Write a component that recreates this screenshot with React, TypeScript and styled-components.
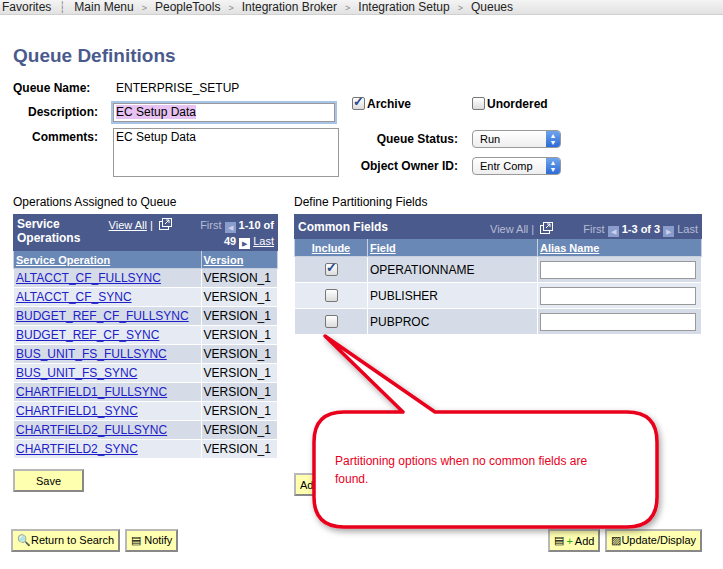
import React from 'react';
import styled, { createGlobalStyle } from 'styled-components';

const Global = createGlobalStyle`
  body { margin: 0; background: #fff; font-family: "Liberation Sans", Arial, sans-serif; font-size: 12px; color: #000; }
`;

const Page = styled.div`
  position: relative;
  width: 723px;
  height: 569px;
  overflow: hidden;
`;

const Crumbs = styled.div`
  height: 14px;
  background: linear-gradient(#f4f4f4, #e2e2e2);
  border-bottom: 1px solid #d0d0d0;
  display: flex;
  align-items: center;
  padding-left: 2px;
  font-size: 12px;
  line-height: 14px;
  color: #222;
`;

const Crumb = styled.span<{ sep?: string }>`
  margin-right: 8px;
  &::after {
    content: '${({ sep }) => sep || ''}';
    margin-left: 8px;
    color: #888;
    font-size: ${({ sep }) => (sep === '>' ? '9px' : '11px')};
  }
`;

const Body = styled.div`
  padding: 30px 0 0 13px;
`;

const Title = styled.h1`
  margin: 0 0 12px 0;
  font-size: 19px;
  font-weight: bold;
  color: #4b5a8c;
`;

const TopForm = styled.div`
  display: flex;
`;

const LabelCol = styled.div`
  display: grid;
  grid-template-columns: 95px 230px;
  row-gap: 6px;
  align-items: start;
`;

const Label = styled.div`
  font-weight: bold;
  text-align: right;
  padding-right: 10px;
  line-height: 18px;
`;

const Value = styled.div`
  line-height: 18px;
  padding-left: 8px;
`;

const TextInput = styled.div<{ tall?: boolean; focus?: boolean }>`
  width: ${({ focus }) => (focus ? '216px' : '220px')};
  height: ${({ tall }) => (tall ? '45px' : '15px')};
  border: 1px solid #999;
  margin-left: 5px;
  padding: 1px 2px;
  font-size: 12px;
  line-height: 14px;
  box-shadow: ${({ focus }) => (focus ? '0 0 0 2px #a8c3e8' : 'none')};
  span { background: ${({ focus }) => (focus ? '#e8c2f2' : 'transparent')}; }
`;

const RightForm = styled.div`
  margin-left: 14px;
  display: grid;
  grid-template-columns: 120px 100px;
  row-gap: 6px;
  padding-top: 16px;
  align-items: center;
`;

const Check = styled.span<{ on?: boolean }>`
  display: inline-block;
  width: 11px;
  height: 11px;
  border: 1px solid #777;
  border-radius: 2px;
  background: linear-gradient(#fff, #dcdcdc);
  position: relative;
  vertical-align: -2px;
  &::after {
    content: '${({ on }) => (on ? '✓' : '')}';
    position: absolute;
    left: 0px;
    top: -4px;
    font-size: 13px;
    font-weight: bold;
    color: #2a4a90;
  }
`;

const CheckLabel = styled.span`
  font-weight: bold;
  margin-left: 2px;
`;

const RightLabel = styled.div`
  font-weight: bold;
  text-align: right;
  padding-right: 14px;
  white-space: nowrap;
`;

const Select = styled.div`
  width: 80px;
  height: 16px;
  border: 1px solid #999;
  border-radius: 4px;
  background: linear-gradient(#fff, #eee);
  display: flex;
  align-items: center;
  justify-content: space-between;
  padding-left: 7px;
  box-sizing: content-box;
  font-size: 11px;
  overflow: hidden;
`;

const SelArrows = styled.span`
  width: 14px;
  height: 16px;
  background: linear-gradient(#6fa4ec, #2d6bd6);
  color: #fff;
  font-size: 7px;
  line-height: 7px;
  text-align: center;
  padding-top: 1px;
  box-sizing: border-box;
`;

const Sections = styled.div`
  display: flex;
  margin-top: 18px;
  align-items: flex-start;
`;

const Section = styled.div<{ w: number }>`
  width: ${({ w }) => w}px;
`;

const Caption = styled.div`
  margin-bottom: 5px;
  font-size: 12px;
`;

const Grid = styled.table<{ w: number }>`
  width: ${({ w }) => w}px;
  border-collapse: collapse;
  border: 1px solid #4b5a8c;
  font-size: 12px;
`;

const Head = styled.th`
  background: #4b5a8c;
  color: #fff;
  text-align: left;
  padding: 2px 3px;
  font-weight: normal;
`;

const HeadBar = styled.div<{ two?: boolean }>`
  display: flex;
  justify-content: space-between;
  align-items: ${({ two }) => (two ? 'flex-start' : 'center')};
`;

const HeadTitle = styled.b`
  font-size: 12px;
  line-height: 14px;
`;

const Nav = styled.span<{ light?: boolean }>`
  font-size: 11px;
  line-height: 16px;
  color: ${({ light }) => (light ? '#b5bdd6' : '#fff')};
  u { color: #fff; }
  b { color: #fff; }
`;

const NavBtn = styled.span<{ dim?: boolean }>`
  display: inline-block;
  width: 11px;
  height: 11px;
  background: ${({ dim }) => (dim ? '#8a9ccb' : '#fff')};
  vertical-align: -1px;
  margin: 0 3px;
  font-size: 7px;
  line-height: 11px;
  text-align: center;
  color: ${({ dim }) => (dim ? '#c9d2ea' : '#4b5a8c')};
`;

const ColHead = styled.th<{ center?: boolean }>`
  background: #6a88b6;
  color: #fff;
  text-align: ${({ center }) => (center ? 'center' : 'left')};
  padding: 1px 2px;
  font-size: 11px;
  text-decoration: underline;
  border: 1px solid #c8d0e0;
  border-top: none;
  height: 15px;
`;

const Cell = styled.td<{ alt?: boolean; h: number; center?: boolean }>`
  background: ${({ alt }) => (alt ? '#e6ebf3' : '#d5dce8')};
  border: 1px solid #fff;
  height: ${({ h }) => h}px;
  padding: 0 2px;
  text-align: ${({ center }) => (center ? 'center' : 'left')};
  white-space: nowrap;
`;

const Link = styled.span`
  color: #2020c8;
  text-decoration: underline;
`;

const AliasBox = styled.div`
  width: 154px;
  height: 16px;
  border: 1px solid #999;
  background: #fff;
`;

const Button = styled.button`
  background: #ffffb0;
  border: 2px solid #b8b8b8;
  border-right-color: #888;
  border-bottom-color: #888;
  font-family: "Liberation Sans", Arial, sans-serif;
  font-size: 11px;
  height: 23px;
  padding: 0 4px;
  display: inline-flex;
  align-items: center;
  gap: 2px;
`;

const SaveRow = styled.div`
  display: flex;
  margin-top: 10px;
`;

const FooterRow = styled.div`
  display: flex;
  justify-content: space-between;
  margin-top: 33px;
  padding-right: 21px;
  margin-left: -2px;
`;

const Group = styled.div`
  display: flex;
  gap: 5px;
`;

const Bubble = styled.div`
  position: absolute;
  left: 0;
  top: 0;
  pointer-events: none;
`;

const BubbleText = styled.div`
  position: absolute;
  left: 335px;
  top: 452px;
  width: 285px;
  color: #e8001c;
  font-size: 12px;
  line-height: 18px;
`;

const ops = [
  'ALTACCT_CF_FULLSYNC', 'ALTACCT_CF_SYNC', 'BUDGET_REF_CF_FULLSYNC', 'BUDGET_REF_CF_SYNC',
  'BUS_UNIT_FS_FULLSYNC', 'BUS_UNIT_FS_SYNC', 'CHARTFIELD1_FULLSYNC', 'CHARTFIELD1_SYNC',
  'CHARTFIELD2_FULLSYNC', 'CHARTFIELD2_SYNC',
];

const fields = [
  { name: 'OPERATIONNAME', on: true },
  { name: 'PUBLISHER', on: false },
  { name: 'PUBPROC', on: false },
];

const Zoom = () => (
  <svg width="13" height="12" viewBox="0 0 13 12" style={{ verticalAlign: -1, marginLeft: 3 }}>
    <rect x="0.5" y="3.5" width="9" height="8" fill="none" stroke="#fff" />
    <rect x="3.5" y="0.5" width="9" height="8" fill="#4b5a8c" stroke="#fff" />
    <path d="M6 6 L10 2 M7 2 H10 V5" stroke="#fff" fill="none" />
  </svg>
);

export default function App() {
  return (
    <Page>
      <Global />
      <Crumbs>
        <Crumb sep="┆">Favorites</Crumb>
        <Crumb sep=">">Main Menu</Crumb>
        <Crumb sep=">">PeopleTools</Crumb>
        <Crumb sep=">">Integration Broker</Crumb>
        <Crumb sep=">">Integration Setup</Crumb>
        <Crumb>Queues</Crumb>
      </Crumbs>
      <Body>
        <Title>Queue Definitions</Title>
        <TopForm>
          <LabelCol>
            <Label style={{ textAlign: 'left' }}>Queue Name:</Label>
            <Value>ENTERPRISE_SETUP</Value>
            <Label>Description:</Label>
            <TextInput focus><span>EC Setup Data</span></TextInput>
            <Label>Comments:</Label>
            <TextInput tall>EC Setup Data</TextInput>
          </LabelCol>
          <RightForm>
            <div><Check on /><CheckLabel>Archive</CheckLabel></div>
            <div><Check /><CheckLabel>Unordered</CheckLabel></div>
            <RightLabel style={{ marginTop: 10 }}>Queue Status:</RightLabel>
            <Select style={{ marginTop: 10 }}>Run<SelArrows>▲<br />▼</SelArrows></Select>
            <RightLabel>Object Owner ID:</RightLabel>
            <Select>Entr Comp<SelArrows>▲<br />▼</SelArrows></Select>
          </RightForm>
        </TopForm>
        <Sections>
          <Section w={281}>
            <Caption>Operations Assigned to Queue</Caption>
            <Grid w={265}>
              <thead>
                <tr>
                  <Head colSpan={2}>
                    <HeadBar two>
                      <HeadTitle>Service<br />Operations</HeadTitle>
                      <Nav><u>View All</u> | <Zoom /></Nav>
                      <Nav light style={{ textAlign: 'right' }}>
                        First<NavBtn dim>◀</NavBtn><b>1-10 of</b><br />
                        <b>49</b><NavBtn>▶</NavBtn><u>Last</u>
                      </Nav>
                    </HeadBar>
                  </Head>
                </tr>
                <tr>
                  <ColHead>Service Operation</ColHead>
                  <ColHead>Version</ColHead>
                </tr>
              </thead>
              <tbody>
                {ops.map((o, i) => (
                  <tr key={o}>
                    <Cell h={18} alt={i % 2 === 1}><Link>{o}</Link></Cell>
                    <Cell h={18} alt={i % 2 === 1}>VERSION_1</Cell>
                  </tr>
                ))}
              </tbody>
            </Grid>
            <SaveRow>
              <Button style={{ width: 71, justifyContent: 'center' }}>Save</Button>
            </SaveRow>
          </Section>
          <Section w={410}>
            <Caption>Define Partitioning Fields</Caption>
            <Grid w={408}>
              <thead>
                <tr>
                  <Head colSpan={3}>
                    <HeadBar>
                      <HeadTitle>Common Fields</HeadTitle>
                      <Nav light style={{ marginLeft: 'auto', marginRight: 30, paddingTop: 4 }}>View All | <Zoom /></Nav>
                      <Nav light style={{ paddingTop: 4 }}>
                        First<NavBtn dim>◀</NavBtn><b>1-3 of 3</b><NavBtn dim>▶</NavBtn>Last
                      </Nav>
                    </HeadBar>
                  </Head>
                </tr>
                <tr>
                  <ColHead center style={{ width: 68 }}>Include</ColHead>
                  <ColHead style={{ width: 165 }}>Field</ColHead>
                  <ColHead>Alias Name</ColHead>
                </tr>
              </thead>
              <tbody>
                {fields.map((f, i) => (
                  <tr key={f.name}>
                    <Cell h={25} alt={i % 2 === 1} center><Check on={f.on} /></Cell>
                    <Cell h={25} alt={i % 2 === 1}>{f.name}</Cell>
                    <Cell h={25} alt={i % 2 === 1}><AliasBox /></Cell>
                  </tr>
                ))}
              </tbody>
            </Grid>
            <SaveRow style={{ marginTop: 138 }}>
              <Button>Add</Button>
            </SaveRow>
          </Section>
        </Sections>
        <FooterRow style={{ marginTop: 33 }}>
          <Group>
            <Button>🔍Return to Search</Button>
            <Button>▤ Notify</Button>
          </Group>
          <Group>
            <Button>▤<span style={{ color: '#2a2' }}>+</span>Add</Button>
            <Button>▨Update/Display</Button>
          </Group>
        </FooterRow>
      </Body>
      <Bubble>
        <svg width="723" height="569">
          <defs>
            <filter id="sh" x="-10%" y="-10%" width="130%" height="130%">
              <feDropShadow dx="2" dy="3" stdDeviation="3" floodOpacity="0.35" />
            </filter>
          </defs>
          <g filter="url(#sh)">
            <path
              d="M325 336 L403 412 L344 412 Q314 412 314 442 V497 Q314 527 344 527 H627 Q657 527 657 497 V442 Q657 412 627 412 H435 Z"
              fill="#fff"
              stroke="#e8001c"
              strokeWidth="3.5"
              strokeLinejoin="round"
            />
          </g>
        </svg>
        <BubbleText>Partitioning options when no common fields are found.</BubbleText>
      </Bubble>
    </Page>
  );
}
